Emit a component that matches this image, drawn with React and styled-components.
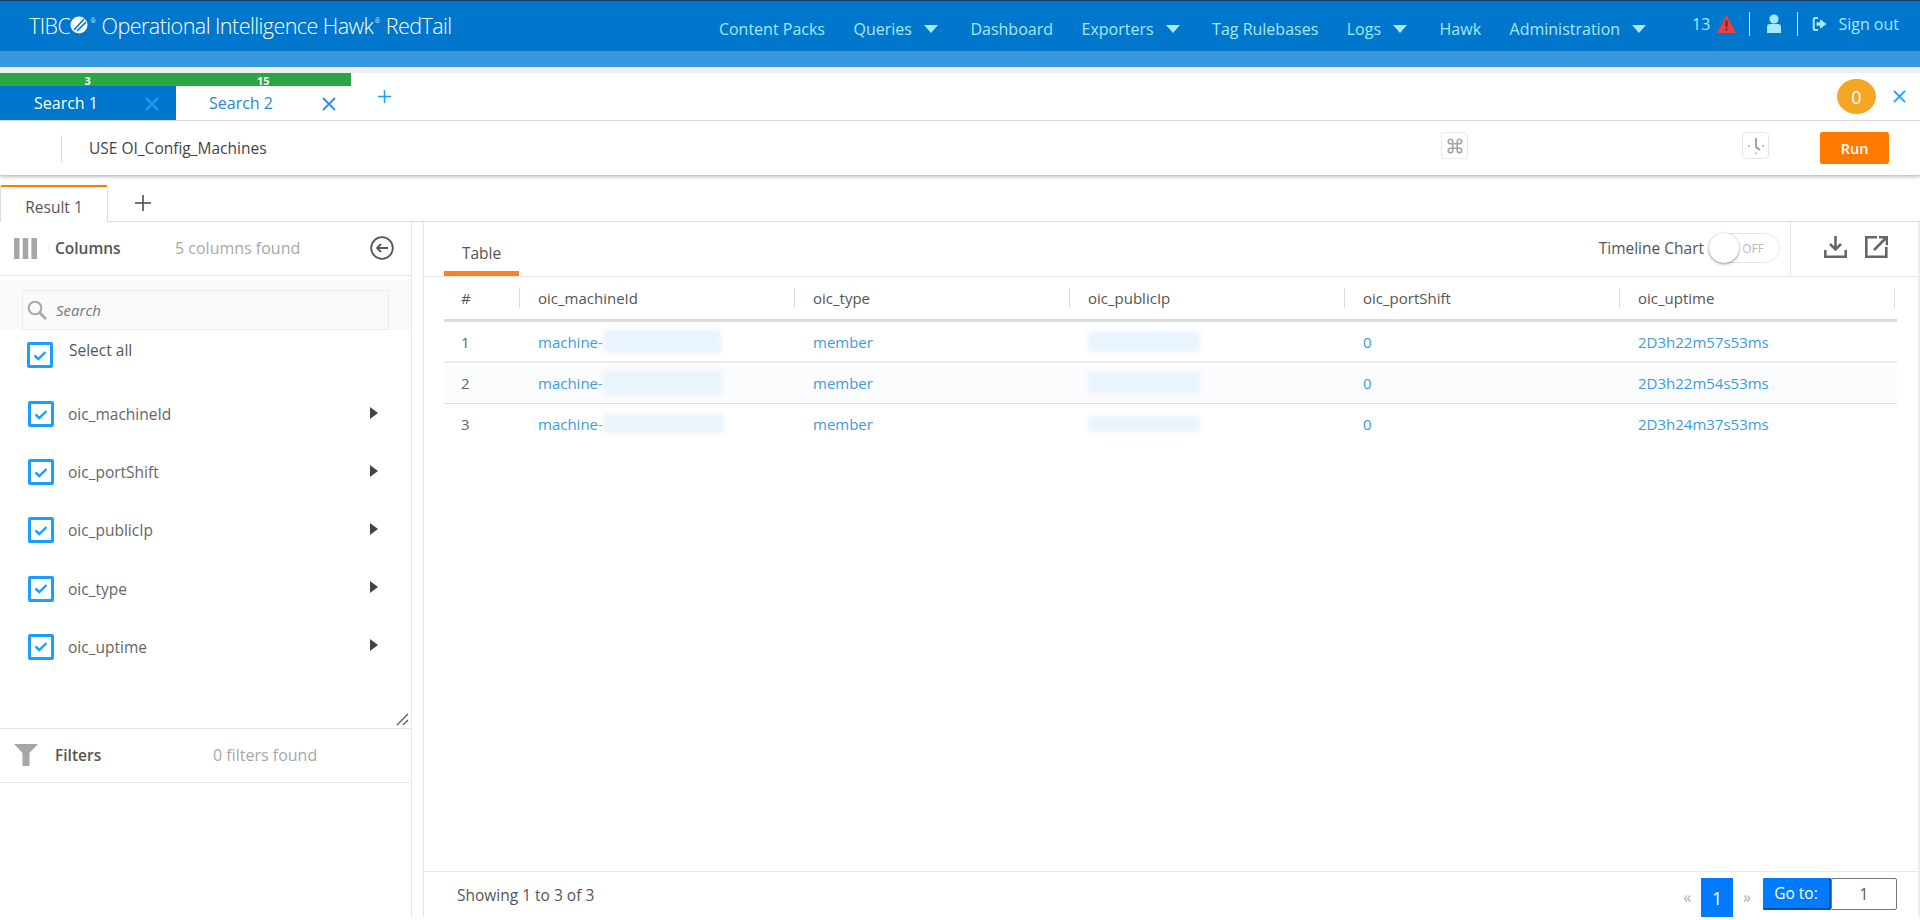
import React from "react";
import styled, { createGlobalStyle } from "styled-components";

const Global = createGlobalStyle`
  html, body { margin: 0; padding: 0; background: #fff; }
  body { font-family: "Open Sans", "Liberation Sans", sans-serif; color: #555; }
  * { box-sizing: border-box; }
`;

const Page = styled.div`
  width: 1920px; height: 920px; overflow: hidden; display: flex; flex-direction: column; background: #fff;
`;
const TopLine = styled.div`height: 1px; background: #1d3c60; flex: none;`;
const NavBar = styled.header`
  height: 50px; flex: none; background: #0077cc; display: flex; align-items: center; padding: 0 21px 0 29px;
`;
const Brand = styled.div`
  display: flex; align-items: center; color: #fff; font-family: "Open Sans", sans-serif; font-weight: 300;
  font-size: 21.5px; letter-spacing: -0.55px; white-space: nowrap; margin-top: -2px;
`;
const Sup = styled.sup`font-size: 7px; margin: -10px 6px 0 1px;`;
const BrandBall = styled.svg`width: 20px; height: 20px; margin: 0 0 0 -1px; flex: none;`;
const NavMenu = styled.nav`
  margin-left: auto; display: flex; align-items: center; gap: 28.5px; color: #a5e8ff; font-size: 16px; padding-top: 5px;
`;
const NavItem = styled.span`display: flex; align-items: center; white-space: nowrap;`;
const Caret = styled.i`
  width: 0; height: 0; margin: 0 4px 0 12px; border-left: 7px solid transparent; border-right: 7px solid transparent;
  border-top: 8px solid #a5e8ff; display: block;
`;
const NavRight = styled.div`
  display: flex; align-items: center; margin-left: 42px; color: #a5e8ff; font-size: 16px; margin-top: -5px;
`;
const Divider = styled.span`width: 1px; height: 24px; background: #cfeeff; margin: ${p => p.$m};`;
const SubBar = styled.div`height: 16px; flex: none; background: #3797dc;`;
const GrayBar = styled.div`height: 6px; flex: none; background: #eeeeee;`;

const TabsArea = styled.div`
  height: 48px; flex: none; border-bottom: 1px solid #ddd; display: flex; position: relative; align-items: flex-start;
`;
const TabCol = styled.div`display: flex; flex-direction: column; width: 175.5px; flex: none;`;
const GreenBar = styled.div`
  height: 13px; background: #28a745; color: #fff; font-size: 11px; font-weight: 700; text-align: center;
  line-height: 16px; overflow: hidden;
`;
const SearchTab = styled.div`
  height: 34px; display: flex; align-items: center; padding-left: ${p => p.$active ? "34px" : "33.5px"};
  background: ${p => p.$active ? "#0077cc" : "#fff"};
  color: ${p => p.$active ? "#fff" : "#2b84cf"}; font-size: 16px; position: relative;
`;
const TabClose = styled.svg`position: absolute; left: ${p => p.$left}px; top: 11px; width: 14px; height: 14px;`;
const AddTab = styled.svg`width: 15px; height: 15px; margin: 16px 0 0 26px; flex: none;`;
const TabsRight = styled.div`margin-left: auto; display: flex; align-items: center; height: 47px; padding-right: 14px;`;
const Badge = styled.div`
  width: 39px; height: 35px; border-radius: 50%; background: #f5a623; color: #fff; font-size: 18px;
  display: flex; align-items: center; justify-content: center; margin-right: 17px;
`;

const QueryBar = styled.div`
  height: 54px; flex: none; display: flex; align-items: center; padding-left: 61px; position: relative;
  box-shadow: 0 2px 3px rgba(0,0,0,.25); z-index: 1; background: #fff;
`;
const QuerySep = styled.span`width: 1px; height: 27px; background: #ddd; margin-right: 27px;`;
const QueryText = styled.span`font-size: 15.5px; color: #444; flex: none; width: 1352px;`;
const IconBtn = styled.span`
  width: 27px; height: 27px; border: 1px solid #e8e8e8; border-radius: 4px; display: flex; align-items: center;
  justify-content: center; margin-top: -5px; flex: none; margin-right: ${p => p.$mr}px;
`;
const RunBtn = styled.button`
  width: 69px; height: 32px; border: 0; border-radius: 2px; background: #ff7a00; color: #fff; font: 600 14.5px "Open Sans", sans-serif;
  padding: 0; flex: none; margin-left: -1px; margin-top: 0;
`;

const ResultBar = styled.div`
  height: 47px; flex: none; border-bottom: 1px solid #ddd; display: flex; align-items: flex-end;
`;
const ResultTab = styled.div`
  width: 108px; height: 37px; border: 1px solid #ddd; border-bottom: 0; border-top: 2px solid #ff7a00; border-radius: 2px 2px 0 0;
  color: #555; font-size: 15.5px; display: flex; align-items: center; justify-content: center; margin-bottom: -1px;
  padding-top: 4px; background: #fff;
`;
const ResultAdd = styled.svg`width: 18px; height: 18px; margin: 0 0 9px 26px;`;

const Main = styled.div`display: flex; height: 695px; flex: none;`;
const Side = styled.aside`width: 412px; flex: none; border-right: 1px solid #e8e8e8; display: flex; flex-direction: column;`;
const SideHead = styled.div`
  height: 54px; flex: none; display: flex; align-items: center; border-bottom: 1px solid #e6e6e6; position: relative; padding: 0 0 1px 14px;
`;
const SideIconSlot = styled.span`width: 41px; flex: none; display: flex;`;
const SideTitle = styled.span`font-size: 15.5px; color: #555; font-weight: 600; width: ${p => p.$w}px; flex: none; -webkit-text-stroke: 0;`;
const SideCount = styled.span`font-size: 16px; color: #a8a8a8;`;
const BackIcon = styled.svg`width: 24px; height: 24px; margin-left: auto; margin-right: 17px; flex: none;`;
const SearchArea = styled.div`
  height: 51px; flex: none; margin-top: 3px; background: #fafafa; padding: 11px 22px 0; display: flex;
`;
const SearchBox = styled.div`
  width: 367px; height: 40px; border: 1px solid #ececec; display: flex; align-items: center; padding-left: 4px; gap: 9px;
  color: #777; font-style: italic; font-size: 15px;
`;
const ColumnList = styled.div`height: 398px; flex: none; position: relative;`;
const AllRow = styled.label`
  display: flex; height: 36px; margin: 12px 0 0 27px; align-items: flex-start; color: #555; font-size: 15.5px;
  & > span:last-child { margin: -3px 0 0 16px; }
`;
const Row = styled.label`
  display: flex; height: 58.2px; align-items: center; margin-left: 28px; color: #666; font-size: 15.5px; padding-right: 33px;
  &:first-of-type { margin-top: 0; }
`;
const RowName = styled.span`margin-left: 14px; flex: 1;`;
const Check = styled.span`
  width: 26px; height: 26px; border: 3px solid #1a9fff; border-radius: 2px; display: flex; align-items: center; justify-content: center; flex: none;
`;
const RowArrow = styled.i`
  width: 0; height: 0; border-top: 6px solid transparent; border-bottom: 6px solid transparent; border-left: 8px solid #444; display: block; margin-top: -3px;
`;
const Rows = styled.div`margin-top: 7px;`;
const Grip = styled.svg`position: absolute; right: 2px; bottom: 2px; width: 13px; height: 13px;`;
const FilterHead = styled(SideHead)`border-top: 1px solid #e6e6e6; height: 55px;`;

const Content = styled.section`
  flex: 1; margin-left: 11px; border-left: 1px solid #e8e8e8; border-right: 2px solid #eee; display: flex; flex-direction: column;
`;
const ContentHead = styled.div`
  height: 55px; flex: none; border-bottom: 1px solid #e8e8e8; display: flex; align-items: stretch; padding-left: 20px;
`;
const ViewTab = styled.div`
  width: 75px; height: 54px; border-bottom: 5px solid #fb7f26; color: #555; font-size: 15.5px; font-weight: 400;
  display: flex; align-items: center; justify-content: center; padding-top: 12px;
`;
const HeadRight = styled.div`margin-left: auto; display: flex; align-items: center;`;
const ToggleLabel = styled.span`font-size: 15.5px; color: #555; margin-right: 5px; margin-top: -2px;`;
const Toggle = styled.div`
  width: 71px; height: 30px; border-radius: 15px; border: 1px solid #e4e4e4; position: relative; display: flex; align-items: center;
  justify-content: flex-end; padding-right: 15px; color: #bbb; font-size: 12px; margin-top: -2px;
`;
const Knob = styled.span`
  position: absolute; left: -1px; top: -1px; width: 30px; height: 30px; border-radius: 50%; background: #fff; box-shadow: 0 1px 3px rgba(0,0,0,.45);
`;
const HeadActions = styled.div`
  width: 128px; height: 100%; margin-left: 10px; border-left: 1px solid #e8e8e8; display: flex; align-items: center; padding: 0 30px 4px 33px; justify-content: space-between;
`;
const TableWrap = styled.div`flex: 1; margin-left: 20px; width: 1453px;`;
const TRow = styled.div`
  display: grid; grid-template-columns: 76px repeat(5, 275px); height: ${p => p.$h}px; align-items: center;
  background: ${p => p.$alt ? "#fbfcfe" : "#fff"};
  border-bottom: ${p => p.$b || "none"};
`;
const TH = styled.div`
  font-size: 15px; color: #555; height: 100%; display: flex; align-items: center; padding-left: ${p => p.$first ? "17px" : "18px"}; position: relative;
  &::after { content: ""; position: absolute; right: 0; top: 11px; height: 20px; width: 1px; background: #ddd; }
`;
const TD = styled.div`
  font-size: 15px; color: ${p => p.$num ? "#666" : "#3d9be0"}; padding-left: ${p => p.$first ? "17px" : "18px"}; display: flex; align-items: center;
  white-space: nowrap; position: relative;
`;
const Blur = styled.span`
  display: block; width: ${p => p.$w}px; height: ${p => p.$h}px; flex: none; background: #e9f4fc; filter: blur(2px);
  position: relative; z-index: 0;
`;
const Foot = styled.div`
  height: 46px; flex: none; border-top: 1px solid #e8e8e8; display: flex; align-items: flex-start; padding: 6px 21px 0 33px; position: relative;
`;
const Showing = styled.span`font-size: 15.5px; color: #555; margin-top: 6px;`;
const Pager = styled.div`margin-left: auto; display: flex; align-items: flex-start;`;
const PageArrow = styled.span`
  color: #aaa; font-size: 16px; margin: ${p => p.$m}; line-height: 39px; height: 39px;
`;
const PageNum = styled.span`
  width: 32px; height: 39px; background: #007bff; color: #fff; font-size: 18px; display: flex; align-items: center; justify-content: center;
`;
const GoTo = styled.span`
  width: 68px; height: 32px; background: #007bff; color: #fff; font-size: 15.5px; display: flex; align-items: center; justify-content: center;
  border-bottom: 2px solid #0056b3; border-right: 2px solid #0056b3; border-radius: 1px; margin-left: 12px;
`;
const GoInput = styled.span`
  width: 66px; height: 32px; border: 1px solid #777; border-radius: 2px; color: #555; font-size: 15.5px; display: flex; align-items: center; justify-content: center;
`;

const X = ({ left, color }) => (
  <TabClose $left={left} viewBox="0 0 14 14">
    <path d="M1 1 13 13M13 1 1 13" stroke={color} strokeWidth="1.8" fill="none" />
  </TabClose>
);
const CheckMark = () => (
  <svg width="14" height="11" viewBox="0 0 14 11"><path d="M1.5 5.5 5.3 9 12.5 2" stroke="#1a9fff" strokeWidth="2.4" fill="none" /></svg>
);
const Box = () => <Check><CheckMark /></Check>;

const data = [
  ["1", 118, 23, "2D3h22m57s53ms"],
  ["2", 119, 24, "2D3h22m54s53ms"],
  ["3", 121, 19, "2D3h24m37s53ms"],
];
const columns = ["oic_machineId", "oic_portShift", "oic_publicIp", "oic_type", "oic_uptime"];
const heads = ["#", "oic_machineId", "oic_type", "oic_publicIp", "oic_portShift", "oic_uptime"];

export default function App() {
  return (
    <Page>
      <Global />
      <TopLine />
      <NavBar>
        <Brand>
          TIBC
          <BrandBall viewBox="0 0 20 20">
            <circle cx="10" cy="10" r="8.5" fill="#fff" />
            <path d="M5 15 15 4M8 16 17 7" stroke="#0077cc" strokeWidth="1.6" fill="none" />
          </BrandBall>
          <Sup>®</Sup>Operational Intelligence Hawk<Sup>®</Sup>RedTail
        </Brand>
        <NavMenu>
          <NavItem>Content Packs</NavItem>
          <NavItem>Queries<Caret /></NavItem>
          <NavItem>Dashboard</NavItem>
          <NavItem>Exporters<Caret /></NavItem>
          <NavItem>Tag Rulebases</NavItem>
          <NavItem>Logs<Caret /></NavItem>
          <NavItem>Hawk</NavItem>
          <NavItem>Administration<Caret /></NavItem>
        </NavMenu>
        <NavRight>
          <span>13</span>
          <svg width="19" height="18" viewBox="0 0 19 18" style={{ marginLeft: 7 }}>
            <path d="M9.5 0 19 18H0Z" fill="#e8413f" />
            <path d="M9.5 5.5v6.5M9.5 13.5v2" stroke="#7a1f2a" strokeWidth="2" />
          </svg>
          <Divider $m="0 17px 0 13px" />
          <svg width="14" height="19" viewBox="0 0 14 19">
            <circle cx="7" cy="5" r="4.6" fill="#a5e8ff" />
            <path d="M0 19v-6q0-3 3-3h8q3 0 3 3v6z" fill="#a5e8ff" />
          </svg>
          <Divider $m="0 14px 0 16px" />
          <svg width="15" height="16" viewBox="0 0 15 16">
            <path d="M6 1H3Q0.7 1 0.7 3.5v9Q0.7 15 3 15h3v-2H3.5Q2.7 13 2.7 12V4Q2.7 3 3.5 3H6z" fill="#a5e8ff" />
            <path d="M8 3.2v3H4.5v3.6H8v3L14.5 8z" fill="#a5e8ff" />
          </svg>
          <span style={{ marginLeft: 11 }}>Sign out</span>
        </NavRight>
      </NavBar>
      <SubBar />
      <GrayBar />
      <TabsArea>
        <TabCol>
          <GreenBar>3</GreenBar>
          <SearchTab $active>Search 1<X left={145} color="#1a9fff" /></SearchTab>
        </TabCol>
        <TabCol>
          <GreenBar>15</GreenBar>
          <SearchTab>Search 2<X left={146} color="#2b8fe8" /></SearchTab>
        </TabCol>
        <AddTab viewBox="0 0 15 15"><path d="M7.5 1v13M1 7.5h13" stroke="#1a9fff" strokeWidth="1.5" /></AddTab>
        <TabsRight>
          <Badge>0</Badge>
          <svg width="13" height="13" viewBox="0 0 14 14"><path d="M1 1 13 13M13 1 1 13" stroke="#1a9fff" strokeWidth="1.9" fill="none" /></svg>
        </TabsRight>
      </TabsArea>
      <QueryBar>
        <QuerySep />
        <QueryText>USE OI_Config_Machines</QueryText>
        <IconBtn $mr={274}>
          <svg width="18" height="18" viewBox="0 0 24 24" fill="none" stroke="#a5a5a5" strokeWidth="2.2">
            <path d="M15 6v12a3 3 0 1 0 3-3H6a3 3 0 1 0 3 3V6a3 3 0 1 0-3 3h12a3 3 0 1 0-3-3" />
          </svg>
        </IconBtn>
        <IconBtn $mr={52}>
          <svg width="20" height="20" viewBox="0 0 20 20" fill="none" stroke="#999">
            <path d="M10 2v9l4 3" strokeWidth="1.8" />
            <path d="M2 10h1.5M16.5 10H18M10 16.5V18" strokeWidth="1.4" />
          </svg>
        </IconBtn>
        <RunBtn>Run</RunBtn>
      </QueryBar>
      <ResultBar>
        <ResultTab>Result 1</ResultTab>
        <ResultAdd viewBox="0 0 18 18"><path d="M9 1v16M1 9h16" stroke="#444" strokeWidth="1.5" /></ResultAdd>
      </ResultBar>
      <Main>
        <Side>
          <SideHead>
            <SideIconSlot>
              <svg width="23" height="21" viewBox="0 0 23 21"><path d="M0 0h5.5v21H0zM8.7 0h5.5v21H8.7zM17.4 0H23v21h-5.6z" fill="#a6a6a6" /></svg>
            </SideIconSlot>
            <SideTitle $w={120}>Columns</SideTitle>
            <SideCount>5 columns found</SideCount>
            <BackIcon viewBox="0 0 24 24" fill="none" stroke="#555" strokeWidth="1.8">
              <circle cx="12" cy="12" r="10.8" />
              <path d="M18 12H7M11 8l-4 4 4 4" />
            </BackIcon>
          </SideHead>
          <SearchArea>
            <SearchBox>
              <svg width="20" height="20" viewBox="0 0 20 20" fill="none" stroke="#a8a8a8">
                <circle cx="8" cy="8" r="6.3" strokeWidth="2" />
                <path d="M12.5 12.5 19 19" strokeWidth="2.8" />
              </svg>
              Search
            </SearchBox>
          </SearchArea>
          <ColumnList>
            <AllRow><Box /><span>Select all</span></AllRow>
            <Rows>
              {columns.map(c => (
                <Row key={c}><Box /><RowName>{c}</RowName><RowArrow /></Row>
              ))}
            </Rows>
            <Grip viewBox="0 0 13 13" fill="none" stroke="#555" strokeWidth="1.2">
              <path d="M1 12 12 1M7 12l5-5" />
            </Grip>
          </ColumnList>
          <FilterHead>
            <SideIconSlot>
              <svg width="24" height="22" viewBox="0 0 24 22"><path d="M0 0h24L15.5 9v13h-7V9z" fill="#a6a6a6" /></svg>
            </SideIconSlot>
            <SideTitle $w={158}>Filters</SideTitle>
            <SideCount>0 filters found</SideCount>
          </FilterHead>
        </Side>
        <Content>
          <ContentHead>
            <ViewTab>Table</ViewTab>
            <HeadRight>
              <ToggleLabel>Timeline Chart</ToggleLabel>
              <Toggle><Knob />OFF</Toggle>
              <HeadActions>
                <svg width="23" height="22" viewBox="0 0 23 22" fill="none" stroke="#666" strokeWidth="2.6">
                  <path d="M11.5 0v13M6 8l5.5 5.5L17 8" />
                  <path d="M1.3 14v6.7h20.4V14" />
                </svg>
                <svg width="23" height="22" viewBox="0 0 23 22" fill="none" stroke="#666" strokeWidth="2.6">
                  <path d="M12 1.3H1.3v19.4h20V11" />
                  <path d="M9 14 21 2M14 1.3h8v8" />
                </svg>
              </HeadActions>
            </HeadRight>
          </ContentHead>
          <TableWrap>
            <TRow $h={45} $b="3px solid #dcdcdc">
              {heads.map((h, i) => <TH key={h} $first={i === 0}>{h}</TH>)}
            </TRow>
            {data.map((d, i) => (
              <TRow key={d[0]} $h={i === 0 ? 41 : 40.5} $alt={i === 1} $b={i === 0 ? "2px solid #ececec" : i === 1 ? "1px solid #dde0e4" : "none"}>
                <TD $first $num>{d[0]}</TD>
                <TD>machine-<Blur $w={d[1]} $h={d[2]} /></TD>
                <TD>member</TD>
                <TD><Blur $w={112} $h={d[2] - 3} /></TD>
                <TD>0</TD>
                <TD>{d[3]}</TD>
              </TRow>
            ))}
          </TableWrap>
          <Foot>
            <Showing>Showing 1 to 3 of 3</Showing>
            <Pager>
              <PageArrow $m="0 10px 0 0">«</PageArrow>
              <PageNum>1</PageNum>
              <PageArrow $m="0 0 0 10px">»</PageArrow>
              <GoTo>Go to:</GoTo>
              <GoInput>1</GoInput>
            </Pager>
          </Foot>
        </Content>
      </Main>
    </Page>
  );
}
